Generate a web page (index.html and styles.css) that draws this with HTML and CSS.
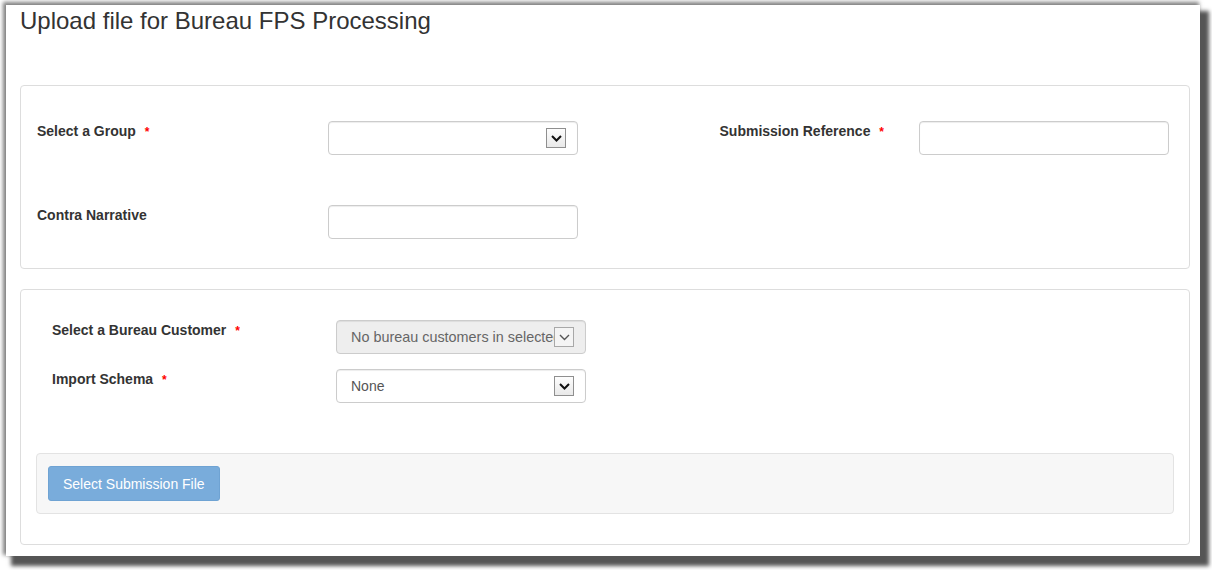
FILE: index.html
```html
<!DOCTYPE html>
<html lang="en">
  <head>
    <meta charset="UTF-8" />
    <meta name="viewport" content="width=device-width, initial-scale=1.0" />
    <title>Upload file for Bureau FPS Processing</title>
    <link rel="stylesheet" href="styles.css">
  </head>
  <body>
    <div class="window">
      <h1 class="page-title">Upload file for Bureau FPS Processing</h1>

      <div class="panel panel-details">
        <div class="form-grid details-grid">
          <label class="field-label">Select a Group <span class="req">*</span></label>
          <div class="select">
            <span class="select-text"></span>
            <span class="select-arrow">
              <svg width="11" height="7" viewBox="0 0 11 7"><polyline points="1,1 5.5,5.5 10,1" /></svg>
            </span>
          </div>

          <label class="field-label align-right">Submission Reference <span class="req">*</span></label>
          <input class="text-input" type="text" />

          <label class="field-label">Contra Narrative</label>
          <input class="text-input" type="text" />
        </div>
      </div>

      <div class="panel panel-upload">
        <div class="form-grid upload-grid">
          <label class="field-label">Select a Bureau Customer <span class="req">*</span></label>
          <div class="select disabled">
            <span class="select-text">No bureau customers in selected group</span>
            <span class="select-arrow">
              <svg width="11" height="7" viewBox="0 0 11 7"><polyline points="1,1 5.5,5.5 10,1" /></svg>
            </span>
          </div>

          <label class="field-label">Import Schema <span class="req">*</span></label>
          <div class="select">
            <span class="select-text">None</span>
            <span class="select-arrow">
              <svg width="11" height="7" viewBox="0 0 11 7"><polyline points="1,1 5.5,5.5 10,1" /></svg>
            </span>
          </div>
        </div>

        <div class="well">
          <button class="btn btn-primary" disabled>Select Submission File</button>
        </div>
      </div>
    </div>
  </body>
</html>
```

FILE: styles.css
```css
html {
  background-color: #fff;
}

body {
  margin: 0;
  padding: 5px 12px 14px 6px;
  font-family: "Liberation Sans", Arial, sans-serif;
  font-size: 14px;
  color: #333;
}

.window {
  width: 1194px;
  height: 551px;
  padding: 3px 10px 0 14px;
  box-sizing: border-box;
  background-color: #fff;
  box-shadow: 7px 8px 4px 2px #555,
    -2px -2px 4px 1px rgba(0, 0, 0, 0.5);
}

.page-title {
  margin: 0 0 51px;
  font-size: 24px;
  font-weight: normal;
  line-height: 26px;
  color: #333;
}

.panel {
  border: 1px solid #ddd;
  border-radius: 4px;
  background-color: #fff;
}

.panel-details {
  padding: 35px 20px 29px 16px;
  margin-bottom: 20px;
}

.panel-upload {
  padding: 30px 15px 30px 15px;
}

.form-grid {
  display: grid;
  align-items: start;
}

.details-grid {
  grid-template-columns: 291px 250px 1fr 250px;
  row-gap: 50px;
}

.upload-grid {
  grid-template-columns: 284px 250px;
  row-gap: 15px;
  padding-left: 16px;
}

.field-label {
  font-weight: bold;
  line-height: 20px;
}

.align-right {
  text-align: right;
  padding-right: 35px;
}

.req {
  color: #ff0000;
  font-size: 12px;
  margin-left: 5px;
}

.text-input,
.select {
  box-sizing: border-box;
  width: 250px;
  height: 34px;
  border: 1px solid #ccc;
  border-radius: 4px;
  background-color: #fff;
  box-shadow: inset 0 1px 1px rgba(0, 0, 0, 0.075);
  font-family: inherit;
  font-size: 14px;
  color: #555;
}

.text-input {
  padding: 6px 12px;
}

.select {
  display: flex;
  align-items: center;
  padding: 0 11px 0 14px;
}

.select-text {
  flex: 1;
  overflow: hidden;
  white-space: nowrap;
}

.select-arrow {
  flex: none;
  box-sizing: border-box;
  width: 20px;
  height: 20px;
  border: 1px solid #8f8f8f;
  background: linear-gradient(#fdfdfd, #e9e9e9);
  display: flex;
  align-items: center;
  justify-content: center;
}

.select-arrow polyline {
  fill: none;
  stroke: #111;
  stroke-width: 2;
}

.select.disabled {
  background-color: #eee;
  color: #666;
}

.select.disabled .select-text {
  font-size: 14.4px;
}

.select.disabled .select-arrow {
  border-color: #a8a8a8;
  background: #f4f4f4;
}

.select.disabled .select-arrow polyline {
  stroke: #555;
  stroke-width: 1.4;
}

.well {
  margin-top: 50px;
  padding: 12px 11px;
  border: 1px solid #e3e3e3;
  border-radius: 4px;
  background-color: #f7f7f7;
}

.btn {
  height: 35px;
  padding: 6px 14px;
  border: 1px solid transparent;
  border-radius: 3px;
  font-family: inherit;
  font-size: 14px;
  line-height: 20px;
}

.btn-primary {
  background-color: #79acdb;
  border-color: #6fa3d3;
  color: #fff;
}
```
